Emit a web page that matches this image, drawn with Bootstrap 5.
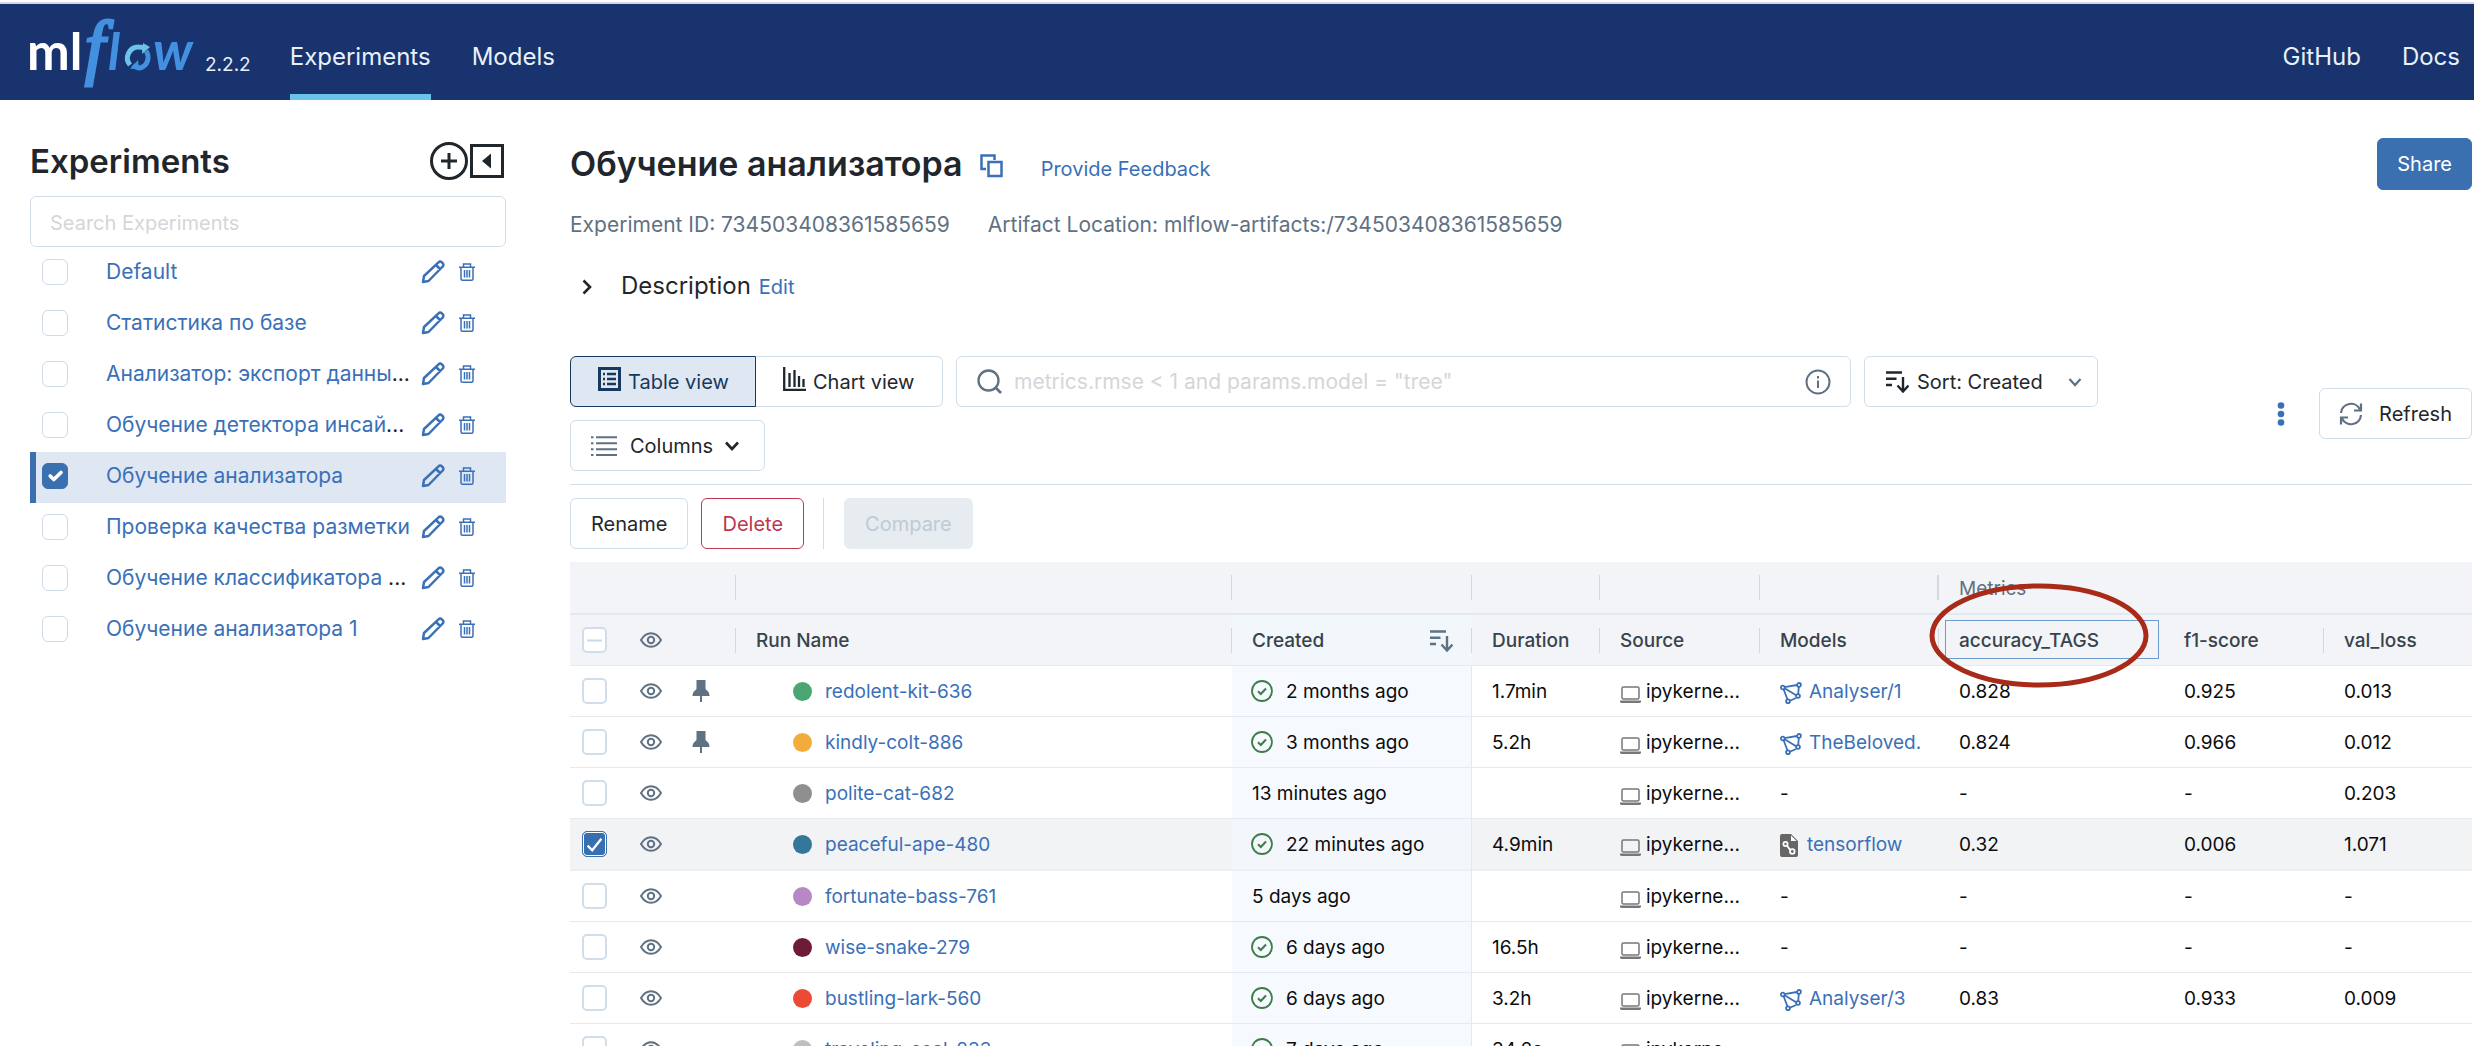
<!DOCTYPE html>
<html lang="ru">
<head>
<meta charset="utf-8">
<meta name="viewport" content="width=device-width, initial-scale=1">
<title>MLflow</title>
<link rel="stylesheet" href="https://cdn.jsdelivr.net/npm/bootstrap@5.3.0/dist/css/bootstrap.min.css">
<style>
:root{--line:#d1dde8;--blue:#3b70b0;--lnk:#3a70b8;--slate:#5f7183;--ink:#1f272d}
body{font-family:Inter,"Noto Sans",sans-serif;font-size:20px;line-height:30px;color:var(--ink);background:#fff}
a{color:var(--lnk);text-decoration:none}
svg{flex:none;display:block}
.ico{fill:none;stroke:currentColor;stroke-width:2}
.topbar{margin-top:2px;border-top:2px solid #d8d9dd;background:#18336d;height:98px;padding:0 14px 0 28px;color:#e8f1fb}
.topbar nav{gap:41px;padding-left:39px}
.topbar .nav-item-link{color:#e8f1fb;font-size:24px;line-height:36px;padding:35px 0 19px;border-bottom:6px solid transparent}
.topbar .nav-item-link.active{border-color:#6ac3e8}
.logo{overflow:visible}
.ver{font-size:19px;line-height:30px;padding-top:46px;margin-left:5px}
.side{width:476px;margin:42px 64px 0 30px;flex:none}
.side-list{margin-top:1px}
.big-title{font-size:33px;line-height:38px;font-weight:600;margin:0}
.big-title.exp-name{font-size:34px}
.fld{border:1px solid var(--line);border-radius:6px;height:51px;font-size:20px;color:var(--ink)}
.side .fld{padding:8px 19px 6px}
.fld::placeholder,.fld input::placeholder{color:#d4d6d9;opacity:1}
.exp{height:51px;padding:0 31px 4px 12px;font-size:21px}
.exp.on{background:#dfe7f2;box-shadow:inset 6px 0 var(--blue)}
.exp .nm{margin-left:38px;width:315px;white-space:nowrap;overflow:hidden}
.exp svg{color:var(--lnk)}
.form-check-input.cb{width:26px;height:26px;margin:0;border:1px solid #cfdae6;border-radius:6px;flex:none}
.form-check-input.cb:checked{background-color:var(--blue);border-color:var(--blue)}
.form-check-input.tcb{width:25px;height:26px;margin:0;border:2px solid #d0ddea;border-radius:5px;display:block}
.form-check-input.tcb:checked{border-width:1px;border-color:var(--blue);background-color:#376fb0;box-shadow:inset 0 0 0 1px #fff;--bs-form-check-bg-image:url("data:image/svg+xml,%3csvg xmlns='http://www.w3.org/2000/svg' viewBox='0 0 20 20'%3e%3cpath fill='none' stroke='%23fff' stroke-width='2' d='M4 11l4 4 8-10'/%3e%3c/svg%3e")}
.tcb.part{--bs-form-check-bg-image:url("data:image/svg+xml,%3csvg xmlns='http://www.w3.org/2000/svg' viewBox='0 0 20 20'%3e%3cpath stroke='%23c8d8e8' stroke-width='2' d='M3 10h14'/%3e%3c/svg%3e");background-image:var(--bs-form-check-bg-image)}
.main{padding:38px 2px 0 0;min-width:0}
.copy{margin:3px 37px 0 17px;color:var(--lnk)}
.meta{color:var(--slate);font-size:21px;margin-top:20px;column-gap:38px}
.desc{font-size:24px;line-height:36px;margin-top:28px}
.desc svg{margin:0 29px 0 12px}
.desc a{font-size:20px}
.tools{margin-top:51px;padding-bottom:13px;border-bottom:1px solid var(--line)}
.wrapbox{gap:13px;flex:1 1 0}
.btn.ui{height:51px;font-size:20px;line-height:30px;border:1px solid var(--line);border-radius:6px;padding:0 20px;color:var(--ink);display:flex;align-items:center;background:#fff}
.btn.ui.seg-l{width:186px;border-radius:6px 0 0 6px;background:#dfe8f2;border-color:#17385f;color:#17385f;padding:0 0 0 27px}
.btn.ui.seg-r{width:187px;border-radius:0 6px 6px 0;border-left:0;padding:0 0 0 27px}
.seg-l svg,.seg-r svg{margin:0 7px 6px 0}
.searchbox{flex:0 1 895px;padding:0 19px 0 20px}
.searchbox svg:first-child{margin-right:12px}
.searchbox input{border:0;outline:0;background:none;font-size:21px;color:var(--ink);min-width:0;padding:0}
.sortbox{width:234px;padding:0 0 0 21px}
.sortbox select{border:0;height:49px;font-size:20px;color:var(--ink);background-color:transparent;padding:0 40px 0 8px;background-size:14px 14px;background-position:right 15px center;--bs-form-select-bg-img:url("data:image/svg+xml,%3csvg xmlns='http://www.w3.org/2000/svg' viewBox='0 0 14 14'%3e%3cpath fill='none' stroke='%235f7183' stroke-width='2.2' d='M1.500 4l5.500 6 5.500-6'/%3e%3c/svg%3e")}
.lst{margin-right:13px}
.caret-ic{margin:0 5px 0 12px}
.more{margin:0 34px 0 30px;color:var(--lnk)}
.grey{color:var(--slate)}
.btn.ui.refresh{padding:0 19px}
.btn.ui.share{background:var(--blue);border-color:var(--blue);color:#fff;height:52px;padding:0 19px}
.btn.ui.del{color:#bd3850;border-color:#bd3850}
.btn.ui.cmp{background:#e6ecf0;border-color:#e6ecf0;color:#bdcad8;opacity:1}
.actions{gap:13px;margin:13px 0}
.actions .rule{width:1px;height:51px;background:var(--line);margin:0 7px 0 6px}
.runs{table-layout:fixed;width:100%;font-size:19px;color:#0b0c0d;border-collapse:separate;border-spacing:0}
.runs th,.runs td{padding:2px 0 0 20px;height:51px;border-bottom:1px solid #e4ebf0;white-space:nowrap;overflow:hidden;vertical-align:middle;line-height:30px}
.runs th{background:#f3f4f7;font-weight:500;color:#38434c}
.runs .grp th{border-bottom:2px solid #e3eaef;height:53px;font-weight:400;color:var(--slate)}
.runs th.sp{background-image:linear-gradient(#d3d8dd,#d3d8dd);background-size:1px 25px;background-repeat:no-repeat;background-position:right center}
.runs th.sp2{background-size:2px 25px}
.runs td:nth-child(-n+3),.runs tr:not(.grp) th:nth-child(-n+2){padding-top:0}
.runs td:first-child,.runs th:first-child{padding-left:12px}
.runs td.made{background:#f6faff;border-right:1px solid #e1e9f0}
.runs th.made{background-color:#f2f7fc}
.runs tr.sel td{background:#f2f3f5;height:52px;border-bottom-width:2px;border-bottom-color:#ebf0f3}
.runs tr.sel td.made{background:#f3f7fb}
.runs td>.d-flex{height:30px}
.headsort{padding-right:19px}
.eye{color:var(--slate)}
.dotc{width:19px;height:19px;border-radius:50%;margin:0 13px 2px 37px;flex:none}
.okc{color:#3c7d46;margin:0 13px 2px -1px}
.lap{color:#777;margin:4px 5px 0 0}
.mdl{margin:1px 7px 0 0;color:var(--lnk)}
.tfi{margin-right:9px}
.focusbox{position:relative}
.focusbox::before{content:"";position:absolute;inset:5px 5px 6px 6px;border:1px solid #6e9bd0}
.anchor{position:relative}
.ring{position:absolute;left:1359px;top:21px;pointer-events:none}
</style>
<script src="https://cdn.jsdelivr.net/npm/bootstrap@5.3.0/dist/js/bootstrap.bundle.min.js"></script>
</head>
<body class="vh-100 overflow-hidden d-flex flex-column">
<svg width="0" height="0" class="position-absolute" aria-hidden="true">
<symbol id="pencil" viewBox="0 0 24 24"><path d="M2 22l1-6L17.500 2.300a2.300 2.300 0 0 1 3.300 0l.9.900a2.300 2.300 0 0 1 0 3.300L7.500 21zM15 5l4 4" fill="none" stroke="currentColor" stroke-width="2.500" stroke-linejoin="round"/></symbol>
<symbol id="trash" viewBox="0 0 16 18"><path d="M0 4.200h16M4.500 4V1h7v3M2 4.500v11.200q0 1.500 1.500 1.500h9q1.500 0 1.500-1.500V4.500M5.500 7v7.500M8 7v7.500M10.500 7v7.500" fill="none" stroke="currentColor" stroke-width="1.500"/></symbol>
<symbol id="eye" viewBox="0 0 22 16"><path d="M1 8Q5 1.200 11 1.200T21 8Q17 14.800 11 14.800T1 8z" fill="none" stroke="currentColor" stroke-width="2"/><circle cx="11" cy="8" r="3.200" fill="none" stroke="currentColor" stroke-width="2"/></symbol>
<symbol id="pin" viewBox="0 0 18 22"><path d="M4.500 0h9v8.500q0 1 1 1.500 3 2 3 6H10v6H8v-6H.5q0-4 3-6 1-.5 1-1.500z" fill="#5f7183"/></symbol>
<symbol id="ok" viewBox="0 0 22 22"><circle cx="11" cy="11" r="10" fill="none" stroke="currentColor" stroke-width="1.800"/><path d="M7 11.300l2.800 2.700L15 8.500" fill="none" stroke="currentColor" stroke-width="2"/></symbol>
<symbol id="laptop" viewBox="0 0 21 17"><rect x="2" y="1" width="17" height="12" rx="1.500" fill="none" stroke="currentColor" stroke-width="1.500"/><path d="M0 14.500h21v1q0 1.500-2 1.500H2q-2 0-2-1.500z" fill="currentColor"/></symbol>
<symbol id="net" viewBox="0 0 22 22"><g fill="none" stroke="currentColor" stroke-width="1.800"><path d="M4.500 5.200L17 3M3.500 7l4 10.500M5 6.500l11.500 7M18.800 5l-.6 7M9.500 19l6.500-3"/><circle cx="2.800" cy="5.500" r="1.900"/><circle cx="19" cy="2.900" r="1.900"/><circle cx="18" cy="14" r="1.900"/><circle cx="8" cy="19.200" r="1.900"/></g></symbol>
<symbol id="sort" viewBox="0 0 23 22"><path d="M0 1.500h16M0 7.800h10.500M0 14h6M17 6v14M11.500 14.500l5.500 6 5.500-6" fill="none" stroke="currentColor" stroke-width="2.400"/></symbol>
</svg>

<header class="topbar d-flex align-items-start flex-shrink-0">
  <svg class="logo mt-2" width="172" height="72" viewBox="0 0 172 72" role="img" aria-label="mlflow">
    <text x="-1" y="58" font-family="Lato" font-weight="700" font-size="51" fill="#fff">ml</text>
    <g fill="#4390e0">
      <text x="57" y="59" font-family="Liberation Serif" font-style="italic" font-size="71" stroke="#4390e0" stroke-width="3">f</text>
      <text x="80" y="58" font-family="Lato" font-weight="700" font-style="italic" font-size="51">l</text>
      <text x="125" y="58" font-family="Lato" font-weight="700" font-style="italic" font-size="54">w</text>
    </g>
    <g fill="none" stroke-width="5"><path d="M102 53a11 11 0 0 1 9-18q4 0 6 2" stroke="#6ac3e8"/><path d="M118 39a11 11 0 0 1-6 17q-4 0-7-3" stroke="#4390e0"/></g>
    <path d="M115 31l-1 11 8-7z" fill="#6ac3e8"/><path d="M102 57l8-9 1 8z" fill="#4390e0"/>
  </svg>
  <span class="ver">2.2.2</span>
  <nav class="d-flex flex-grow-1">
    <a class="nav-item-link active" href="#">Experiments</a>
    <a class="nav-item-link" href="#">Models</a>
    <a class="nav-item-link ms-auto" href="#">GitHub</a>
    <a class="nav-item-link" href="#">Docs</a>
  </nav>
</header>

<div class="d-flex">
<aside class="side">
  <div class="d-flex align-items-center mb-3">
    <h2 class="big-title me-auto">Experiments</h2>
    <svg class="ico" width="40" height="38" viewBox="0 0 40 38"><g stroke-width="3"><circle cx="19" cy="19" r="17.500"/><path d="M19 11v16M11 19h16"/></g></svg>
    <svg width="36" height="34" viewBox="0 0 36 34"><rect x="1.500" y="1.500" width="31" height="31" fill="none" stroke="#1f272d" stroke-width="3"/><path d="M12 17l9-7.500v15z" fill="#1f272d"/></svg>
  </div>
  <input class="form-control fld" type="text" placeholder="Search Experiments" aria-label="Search Experiments">
  <div class="side-list">
    <div class="exp d-flex align-items-center"><input class="form-check-input cb" type="checkbox" aria-label="Default"><span class="nm"><a href="#">Default</a></span><svg width="24" height="24"><use href="#pencil"/></svg><svg class="ms-auto" width="16" height="18"><use href="#trash"/></svg></div>
    <div class="exp d-flex align-items-center"><input class="form-check-input cb" type="checkbox" aria-label="Статистика по базе"><span class="nm"><a href="#">Статистика по базе</a></span><svg width="24" height="24"><use href="#pencil"/></svg><svg class="ms-auto" width="16" height="18"><use href="#trash"/></svg></div>
    <div class="exp d-flex align-items-center"><input class="form-check-input cb" type="checkbox" aria-label="Анализатор: экспорт данных"><span class="nm"><a href="#">Анализатор: экспорт данны</a>...</span><svg width="24" height="24"><use href="#pencil"/></svg><svg class="ms-auto" width="16" height="18"><use href="#trash"/></svg></div>
    <div class="exp d-flex align-items-center"><input class="form-check-input cb" type="checkbox" aria-label="Обучение детектора"><span class="nm"><a href="#">Обучение детектора инсай</a>...</span><svg width="24" height="24"><use href="#pencil"/></svg><svg class="ms-auto" width="16" height="18"><use href="#trash"/></svg></div>
    <div class="exp on d-flex align-items-center"><input class="form-check-input cb" type="checkbox" checked aria-label="Обучение анализатора"><span class="nm"><a href="#">Обучение анализатора</a></span><svg width="24" height="24"><use href="#pencil"/></svg><svg class="ms-auto" width="16" height="18"><use href="#trash"/></svg></div>
    <div class="exp d-flex align-items-center"><input class="form-check-input cb" type="checkbox" aria-label="Проверка качества разметки"><span class="nm"><a href="#">Проверка качества разметки</a></span><svg width="24" height="24"><use href="#pencil"/></svg><svg class="ms-auto" width="16" height="18"><use href="#trash"/></svg></div>
    <div class="exp d-flex align-items-center"><input class="form-check-input cb" type="checkbox" aria-label="Обучение классификатора"><span class="nm"><a href="#">Обучение классификатора</a> ...</span><svg width="24" height="24"><use href="#pencil"/></svg><svg class="ms-auto" width="16" height="18"><use href="#trash"/></svg></div>
    <div class="exp d-flex align-items-center"><input class="form-check-input cb" type="checkbox" aria-label="Обучение анализатора 1"><span class="nm"><a href="#">Обучение анализатора 1</a></span><svg width="24" height="24"><use href="#pencil"/></svg><svg class="ms-auto" width="16" height="18"><use href="#trash"/></svg></div>
  </div>
</aside>

<main class="main flex-grow-1">
  <div class="d-flex align-items-center">
    <div class="d-flex align-items-baseline me-auto">
      <h1 class="big-title exp-name">Обучение анализатора</h1>
      <svg class="ico copy align-self-center" width="24" height="24" viewBox="0 0 24 24"><path d="M6 15H1.500V1.500h13V6M8.500 8h13v14h-13z" stroke-width="2.500"/></svg>
      <a href="#">Provide Feedback</a>
    </div>
    <button class="btn ui share" type="button">Share</button>
  </div>
  <div class="meta d-flex"><span>Experiment ID: 734503408361585659</span><span>Artifact Location: mlflow-artifacts:/734503408361585659</span></div>
  <div class="desc d-flex align-items-baseline">
    <svg class="ico align-self-center" width="10" height="16" viewBox="0 0 10 16"><path d="M1.500 1.500L8 8l-6.500 6.500" stroke-width="2.600"/></svg>
    <span>Description</span><a href="#" class="ms-2">Edit</a>
  </div>

  <div class="tools d-flex align-items-center">
    <div class="wrapbox d-flex flex-wrap">
      <div class="d-flex">
        <button class="btn ui seg-l" type="button"><svg class="ico" width="23" height="24" viewBox="0 0 23 24"><path d="M1.500 1.500h20v21h-20z" stroke-width="3"/><path d="M9 7h9M9 12h9M9 17h9M5 7h2M5 12h2M5 17h2" stroke-width="2.400"/></svg>Table view</button>
        <button class="btn ui seg-r" type="button"><svg class="ico" width="23" height="24" viewBox="0 0 23 24"><path d="M1.200 0v22.800H23M6.500 6v14M11.500 3v17M16 9v11M20.500 12v8" stroke-width="2.300"/></svg>Chart view</button>
      </div>
      <div class="fld searchbox d-flex align-items-center">
        <svg class="ico grey" width="25" height="25" viewBox="0 0 25 25"><circle cx="11.500" cy="11.500" r="10" stroke-width="2.300"/><path d="M18 18l6 6" stroke-width="2.600"/></svg>
        <input class="flex-grow-1" type="text" placeholder="metrics.rmse &lt; 1 and params.model = &quot;tree&quot;" aria-label="Search runs">
        <svg class="ico grey" width="26" height="26" viewBox="0 0 26 26"><circle cx="13" cy="13" r="11.500"/><path d="M13 11.500V19M13 7v2.500"/></svg>
      </div>
      <div class="fld sortbox d-flex align-items-center">
        <svg width="23" height="22"><use href="#sort"/></svg>
        <select class="form-select shadow-none" aria-label="Sort"><option>Sort: Created</option></select>
      </div>
      <button class="btn ui" type="button"><svg class="ico grey lst" width="26" height="20" viewBox="0 0 26 20"><path d="M5 1.200h21M5 7.200h21M5 13.200h21M5 19h21M0 1.200h2.500M0 7.200h2.500M0 13.200h2.500M0 19h2.500"/></svg>Columns<svg class="ico caret-ic" width="14" height="10" viewBox="0 0 14 10"><path d="M1 1.500l6 6.500 6-6.500" stroke-width="2.600"/></svg></button>
    </div>
    <button class="btn more p-0 border-0" type="button" aria-label="More"><svg width="8" height="24" viewBox="0 0 8 24" fill="currentColor"><circle cx="4" cy="3.500" r="3.300"/><circle cx="4" cy="12" r="3.300"/><circle cx="4" cy="20.500" r="3.300"/></svg></button>
    <button class="btn ui refresh" type="button"><svg class="ico grey me-3" width="24" height="24" viewBox="0 0 24 24"><path d="M2 11A10 10 0 0 1 21 7.500M22 13A10 10 0 0 1 3 16.500M22 1.500V8.500h-7M2 22.500v-7h7" stroke-width="2.200"/></svg>Refresh</button>
  </div>
  <div class="actions d-flex align-items-center">
    <button class="btn ui" type="button">Rename</button>
    <button class="btn ui del" type="button">Delete</button>
    <span class="rule"></span>
    <button class="btn ui cmp" type="button" disabled>Compare</button>
  </div>

  <div class="anchor">
  <table class="runs">
    <colgroup><col style="width:50px"><col style="width:56px"><col style="width:60px"><col><col style="width:240px"><col style="width:128px"><col style="width:160px"><col style="width:179px"><col style="width:225px"><col style="width:160px"><col style="width:148px"></colgroup>
    <thead>
      <tr class="grp"><th colspan="3" class="sp"></th><th class="sp"></th><th class="sp"></th><th class="sp"></th><th class="sp"></th><th class="sp sp2"></th><th colspan="3">Metrics</th></tr>
      <tr><th><input class="form-check-input tcb part" type="checkbox" aria-label="Select all"></th><th><svg class="eye" width="22" height="16"><use href="#eye"/></svg></th><th class="sp"></th><th class="sp">Run Name</th><th class="made sp"><div class="headsort d-flex align-items-center justify-content-between">Created<svg class="grey" width="23" height="22"><use href="#sort"/></svg></div></th><th class="sp">Duration</th><th class="sp">Source</th><th class="sp">Models</th><th class="focusbox">accuracy_TAGS</th><th class="sp">f1-score</th><th>val_loss</th></tr>
    </thead>
    <tbody>
      <tr><td><input class="form-check-input tcb" type="checkbox" aria-label="redolent-kit-636"></td><td><svg class="eye" width="22" height="16"><use href="#eye"/></svg></td><td class="ps-3"><svg width="18" height="22"><use href="#pin"/></svg></td><td><div class="d-flex align-items-center"><span class="dotc" style="background:#4ba673"></span><a href="#">redolent-kit-636</a></div></td><td class="made"><div class="d-flex align-items-center"><svg class="okc" width="22" height="22"><use href="#ok"/></svg>2 months ago</div></td><td>1.7min</td><td><div class="d-flex align-items-center"><svg class="lap" width="21" height="17"><use href="#laptop"/></svg>ipykerne...</div></td><td><div class="d-flex align-items-center"><svg class="mdl" width="22" height="22"><use href="#net"/></svg><a href="#">Analyser/1</a></div></td><td>0.828</td><td>0.925</td><td>0.013</td></tr>
      <tr><td><input class="form-check-input tcb" type="checkbox" aria-label="kindly-colt-886"></td><td><svg class="eye" width="22" height="16"><use href="#eye"/></svg></td><td class="ps-3"><svg width="18" height="22"><use href="#pin"/></svg></td><td><div class="d-flex align-items-center"><span class="dotc" style="background:#f2ac3c"></span><a href="#">kindly-colt-886</a></div></td><td class="made"><div class="d-flex align-items-center"><svg class="okc" width="22" height="22"><use href="#ok"/></svg>3 months ago</div></td><td>5.2h</td><td><div class="d-flex align-items-center"><svg class="lap" width="21" height="17"><use href="#laptop"/></svg>ipykerne...</div></td><td><div class="d-flex align-items-center"><svg class="mdl" width="22" height="22"><use href="#net"/></svg><a href="#">TheBeloved.</a></div></td><td>0.824</td><td>0.966</td><td>0.012</td></tr>
      <tr><td><input class="form-check-input tcb" type="checkbox" aria-label="polite-cat-682"></td><td><svg class="eye" width="22" height="16"><use href="#eye"/></svg></td><td></td><td><div class="d-flex align-items-center"><span class="dotc" style="background:#8f8f8f"></span><a href="#">polite-cat-682</a></div></td><td class="made">13 minutes ago</td><td></td><td><div class="d-flex align-items-center"><svg class="lap" width="21" height="17"><use href="#laptop"/></svg>ipykerne...</div></td><td>-</td><td>-</td><td>-</td><td>0.203</td></tr>
      <tr class="sel"><td><input class="form-check-input tcb" type="checkbox" checked aria-label="peaceful-ape-480"></td><td><svg class="eye" width="22" height="16"><use href="#eye"/></svg></td><td></td><td><div class="d-flex align-items-center"><span class="dotc" style="background:#34779b"></span><a href="#">peaceful-ape-480</a></div></td><td class="made"><div class="d-flex align-items-center"><svg class="okc" width="22" height="22"><use href="#ok"/></svg>22 minutes ago</div></td><td>4.9min</td><td><div class="d-flex align-items-center"><svg class="lap" width="21" height="17"><use href="#laptop"/></svg>ipykerne...</div></td><td><div class="d-flex align-items-center"><svg class="tfi" width="18" height="23" viewBox="0 0 18 23"><path d="M2 0h9l7 7v14q0 2-2 2H2q-2 0-2-2V2q0-2 2-2z" fill="#666"/><path d="M11 1.500V7h5.500z" fill="#fff"/><g fill="none" stroke="#fff" stroke-width="1.800"><circle cx="5.500" cy="10" r="2.100"/><circle cx="12.300" cy="17.500" r="2.300"/><path d="M7 11.500l2 3 1.500 1.500"/></g></svg><a href="#">tensorflow</a></div></td><td>0.32</td><td>0.006</td><td>1.071</td></tr>
      <tr><td><input class="form-check-input tcb" type="checkbox" aria-label="fortunate-bass-761"></td><td><svg class="eye" width="22" height="16"><use href="#eye"/></svg></td><td></td><td><div class="d-flex align-items-center"><span class="dotc" style="background:#b689c4"></span><a href="#">fortunate-bass-761</a></div></td><td class="made">5 days ago</td><td></td><td><div class="d-flex align-items-center"><svg class="lap" width="21" height="17"><use href="#laptop"/></svg>ipykerne...</div></td><td>-</td><td>-</td><td>-</td><td>-</td></tr>
      <tr><td><input class="form-check-input tcb" type="checkbox" aria-label="wise-snake-279"></td><td><svg class="eye" width="22" height="16"><use href="#eye"/></svg></td><td></td><td><div class="d-flex align-items-center"><span class="dotc" style="background:#701b36"></span><a href="#">wise-snake-279</a></div></td><td class="made"><div class="d-flex align-items-center"><svg class="okc" width="22" height="22"><use href="#ok"/></svg>6 days ago</div></td><td>16.5h</td><td><div class="d-flex align-items-center"><svg class="lap" width="21" height="17"><use href="#laptop"/></svg>ipykerne...</div></td><td>-</td><td>-</td><td>-</td><td>-</td></tr>
      <tr><td><input class="form-check-input tcb" type="checkbox" aria-label="bustling-lark-560"></td><td><svg class="eye" width="22" height="16"><use href="#eye"/></svg></td><td></td><td><div class="d-flex align-items-center"><span class="dotc" style="background:#eb4b35"></span><a href="#">bustling-lark-560</a></div></td><td class="made"><div class="d-flex align-items-center"><svg class="okc" width="22" height="22"><use href="#ok"/></svg>6 days ago</div></td><td>3.2h</td><td><div class="d-flex align-items-center"><svg class="lap" width="21" height="17"><use href="#laptop"/></svg>ipykerne...</div></td><td><div class="d-flex align-items-center"><svg class="mdl" width="22" height="22"><use href="#net"/></svg><a href="#">Analyser/3</a></div></td><td>0.83</td><td>0.933</td><td>0.009</td></tr>
      <tr><td><input class="form-check-input tcb" type="checkbox" aria-label="traveling-seal-833"></td><td><svg class="eye" width="22" height="16"><use href="#eye"/></svg></td><td></td><td><div class="d-flex align-items-center"><span class="dotc" style="background:#bfbfbf"></span><a href="#">traveling-seal-833</a></div></td><td class="made"><div class="d-flex align-items-center"><svg class="okc" width="22" height="22"><use href="#ok"/></svg>7 days ago</div></td><td>34.2s</td><td><div class="d-flex align-items-center"><svg class="lap" width="21" height="17"><use href="#laptop"/></svg>ipykerne...</div></td><td>-</td><td>-</td><td>-</td><td>-</td></tr>
    </tbody>
  </table>
  <svg class="ring" width="220" height="105" viewBox="0 0 220 105"><ellipse cx="110" cy="52.500" rx="107" ry="49.500" fill="none" stroke="#a72b18" stroke-width="5"/></svg>
  </div>
</main>
</div>
</body>
</html>
